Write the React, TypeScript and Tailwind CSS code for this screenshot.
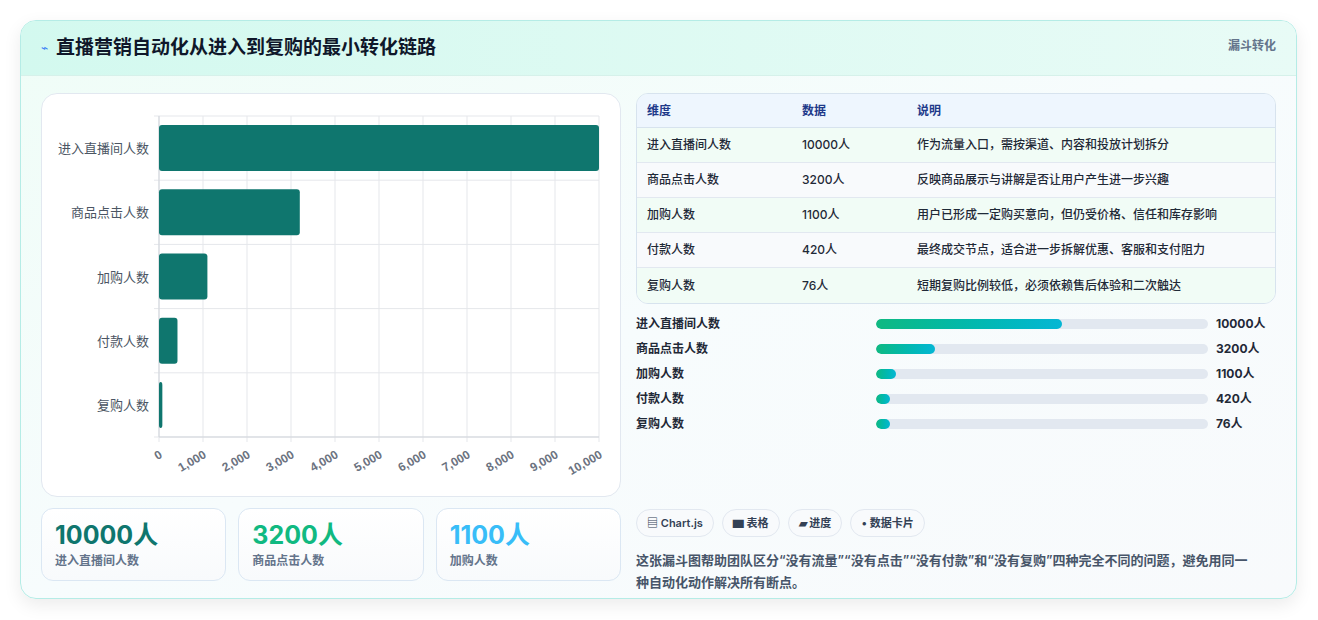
import React from "react";

const rows = [
  { k: "进入直播间人数", v: 10000, d: "作为流量入口，需按渠道、内容和投放计划拆分" },
  { k: "商品点击人数", v: 3200, d: "反映商品展示与讲解是否让用户产生进一步兴趣" },
  { k: "加购人数", v: 1100, d: "用户已形成一定购买意向，但仍受价格、信任和库存影响" },
  { k: "付款人数", v: 420, d: "最终成交节点，适合进一步拆解优惠、客服和支付阻力" },
  { k: "复购人数", v: 76, d: "短期复购比例较低，必须依赖售后体验和二次触达" },
];

function Chart() {
  const x0 = 117, x1 = 557, y0 = 22, y1 = 343;
  const rh = (y1 - y0) / 5;
  const ticks = Array.from({ length: 11 }, (_, i) => i);
  return (
    <svg width="578" height="401" className="block">
      {ticks.map((i) => {
        const x = x0 + ((x1 - x0) * i) / 10;
        return <line key={i} x1={x} x2={x} y1={y0} y2={y1 + 5} stroke="#e5e7eb" />;
      })}
      {[0, 1, 2, 3, 4, 5].map((i) => (
        <line key={i} x1={x0 - 5} x2={x1} y1={y0 + rh * i} y2={y0 + rh * i} stroke="#e5e7eb" />
      ))}
      <line x1={x0} x2={x0} y1={y0} y2={y1} stroke="#d1d5db" />
      <line x1={x0} x2={x1} y1={y1} y2={y1} stroke="#d1d5db" />
      {rows.map((r, i) => {
        const w = Math.max(((x1 - x0) * r.v) / 10000, 3);
        const cy = y0 + rh * i + rh / 2;
        return (
          <g key={r.k}>
            <rect x={x0} y={cy - 23} width={w} height={46} rx={3} fill="#0f766e" />
            <text x={x0 - 10} y={cy + 5} textAnchor="end" fontSize="13" fill="#4b5563" fontFamily="'Noto Sans CJK SC', sans-serif">{r.k}</text>
          </g>
        );
      })}
      {ticks.map((i) => {
        const x = x0 + ((x1 - x0) * i) / 10;
        return (
          <text key={i} x={x + 4} y={y1 + 20} textAnchor="end" fontSize="12" fontWeight="bold" fill="#6b7280" fontFamily="'Liberation Sans', sans-serif" transform={`rotate(-30 ${x + 4} ${y1 + 20})`}>
            {(i * 1000).toLocaleString("en-US")}
          </text>
        );
      })}
    </svg>
  );
}

export default function App() {
  return (
    <div className="w-[1318px] h-[620px] bg-white p-5 pb-0" style={{ fontFamily: "Inter, 'Noto Sans CJK SC', sans-serif" }}>
      <div className="w-[1277px] h-[579px] rounded-2xl border border-[#b5ece6] overflow-hidden shadow-[0_6px_18px_rgba(0,0,0,0.08)] bg-gradient-to-br from-[#effdf7] via-[#f7fcfd] to-[#f8fafc]">
        <div className="h-[55px] flex items-center justify-between px-5 bg-gradient-to-r from-[#d3f9ef] to-[#e8fbf6] border-b border-[#d6f1ea]">
          <div className="flex items-center gap-2">
            <span className="text-[#3b82f6] text-xs">⌁</span>
            <h1 className="text-[19px] font-bold text-[#0f172a]">直播营销自动化从进入到复购的最小转化链路</h1>
          </div>
          <span className="text-xs font-semibold text-[#64748b] self-start mt-[17px]">漏斗转化</span>
        </div>
        <div className="flex gap-[15px] px-5 pt-[17px]">
          <div className="w-[580px] flex flex-col gap-[11px]">
            <div className="h-[404px] bg-white rounded-2xl border border-[#e2e8f0]">
              <Chart />
            </div>
            <div className="flex gap-3">
              {[
                ["10000人", "进入直播间人数", "text-[#0f766e]"],
                ["3200人", "商品点击人数", "text-[#10b981]"],
                ["1100人", "加购人数", "text-[#38bdf8]"],
              ].map(([v, l, c]) => (
                <div key={l} className="flex-1 h-[73px] rounded-xl border border-[#dbe7f3] bg-gradient-to-b from-white to-[#f8fafc] px-[13px] pt-[10px]">
                  <div className={`text-[25px] leading-[32px] font-bold ${c}`}>{v}</div>
                  <div className="text-xs text-[#64748b] font-semibold mt-[2px]">{l}</div>
                </div>
              ))}
            </div>
          </div>
          <div className="flex-1 flex flex-col">
            <div className="rounded-xl border border-[#d7e3ee] overflow-hidden text-xs">
              <div className="flex h-[34px] items-center bg-[#eef6fe] border-b border-[#d7e3ee] font-semibold text-[#1e3a8a] px-[10px]">
                <div className="w-[155px]">维度</div>
                <div className="w-[115px]">数据</div>
                <div>说明</div>
              </div>
              {rows.map((r, i) => (
                <div key={r.k} className={`flex h-[35px] items-center px-[10px] text-[#1f2937] font-medium ${i < 4 ? "border-b border-[#e2e8f0]" : ""} ${i % 2 === 0 ? "bg-[#f1fcf6]" : "bg-[#f8fafc]"}`}>
                  <div className="w-[155px]">{r.k}</div>
                  <div className="w-[115px]">{r.v}人</div>
                  <div>{r.d}</div>
                </div>
              ))}
            </div>
            <div className="mt-[12px] flex flex-col gap-[9px]">
              {rows.map((r) => (
                <div key={r.k} className="flex items-center h-4 text-xs font-semibold text-[#1f2937]">
                  <div className="w-[240px]">{r.k}</div>
                  <div className="w-[332px] h-[10px] rounded-full bg-[#e2e8f0] overflow-hidden">
                    <div className="h-full rounded-full bg-gradient-to-r from-[#10b981] to-[#06b6d4]" style={{ width: `${Math.max(r.v / 10000 * 56, 4.3)}%` }} />
                  </div>
                  <div className="ml-2 font-bold">{r.v}人</div>
                </div>
              ))}
            </div>
            <div className="mt-[77px] flex gap-[8px]">
              {["▤ Chart.js", "▆ 表格", "▰ 进度", "• 数据卡片"].map((t) => (
                <span key={t} className="h-[28px] px-[10px] flex items-center rounded-full border border-[#e2e8f0] bg-[#f8fafc] text-[11px] font-semibold text-[#334155]">{t}</span>
              ))}
            </div>
            <p className="mt-[12px] text-[13px] leading-[22px] font-semibold text-[#475569] pr-4">
              这张漏斗图帮助团队区分“没有流量”“没有点击”“没有付款”和“没有复购”四种完全不同的问题，避免用同一种自动化动作解决所有断点。
            </p>
          </div>
        </div>
      </div>
    </div>
  );
}
